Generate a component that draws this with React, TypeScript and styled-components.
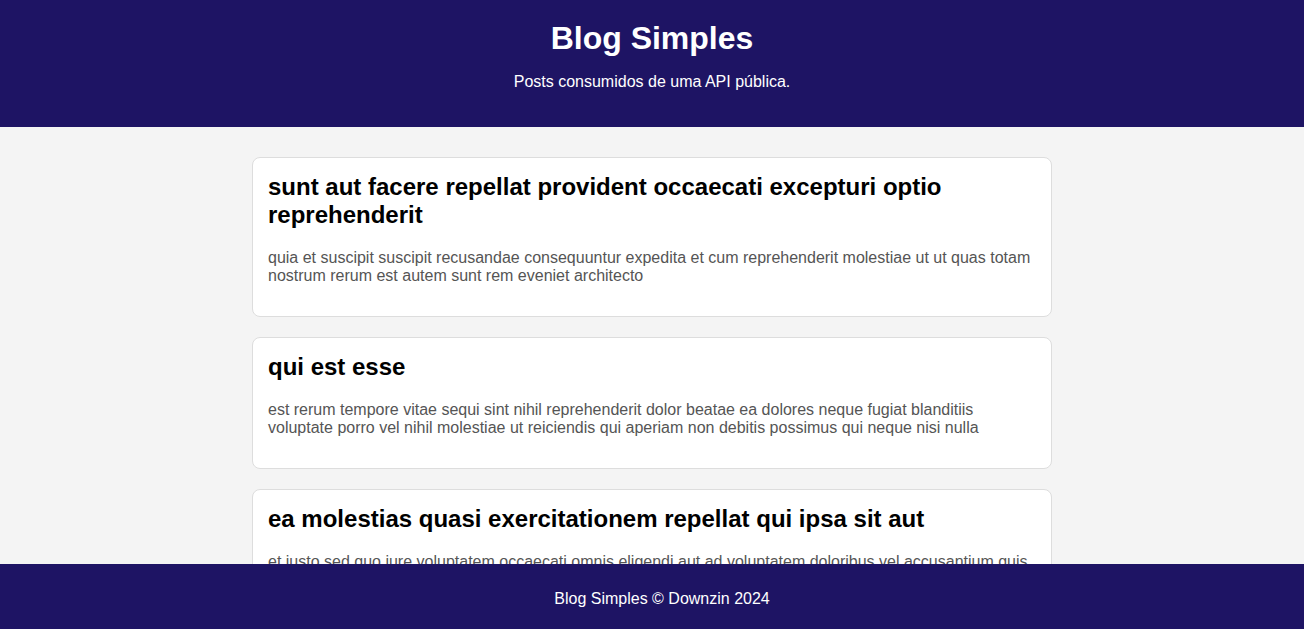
import React from "react";
import styled, { createGlobalStyle } from "styled-components";

const GlobalStyle = createGlobalStyle`
  html {
    scrollbar-width: none;
  }

  body {
    margin: 0;
    background: #f4f4f4;
    font-family: "Liberation Sans", Arial, sans-serif;
    font-size: 16px;
    line-height: 18px;
  }
`;

const Header = styled.header`
  padding: 20px 20px 36px;
  background: #1e1464;
  color: #fff;
  text-align: center;
`;

const SiteTitle = styled.h1`
  margin: 0 0 16px;
  font-size: 32px;
  line-height: 37px;
`;

const Tagline = styled.p`
  margin: 0;
`;

const Posts = styled.main`
  display: flex;
  flex-direction: column;
  gap: 20px;
  max-width: 800px;
  margin: 30px auto;
`;

const Post = styled.article`
  padding: 15px 15px 31px;
  border: 1px solid #ddd;
  border-radius: 8px;
  background: #fff;
`;

const PostTitle = styled.h2`
  margin: 0 0 20px;
  color: #000;
  font-size: 24px;
  line-height: 28px;
`;

const PostBody = styled.p`
  margin: 0;
  color: #555;
`;

const Footer = styled.footer`
  position: fixed;
  bottom: 0;
  width: 100%;
  padding: 26px 10px 21px;
  background: #1e1464;
  color: #fff;
  text-align: center;
`;

const posts = [
  {
    title: "sunt aut facere repellat provident occaecati excepturi optio reprehenderit",
    body: "quia et suscipit suscipit recusandae consequuntur expedita et cum reprehenderit molestiae ut ut quas totam nostrum rerum est autem sunt rem eveniet architecto",
  },
  {
    title: "qui est esse",
    body: "est rerum tempore vitae sequi sint nihil reprehenderit dolor beatae ea dolores neque fugiat blanditiis voluptate porro vel nihil molestiae ut reiciendis qui aperiam non debitis possimus qui neque nisi nulla",
  },
  {
    title: "ea molestias quasi exercitationem repellat qui ipsa sit aut",
    body: "et iusto sed quo iure voluptatem occaecati omnis eligendi aut ad voluptatem doloribus vel accusantium quis",
  },
];

export default function App() {
  return (
    <>
      <GlobalStyle />
      <Header>
        <SiteTitle>Blog Simples</SiteTitle>
        <Tagline>Posts consumidos de uma API pública.</Tagline>
      </Header>
      <Posts>
        {posts.map((post) => (
          <Post key={post.title}>
            <PostTitle>{post.title}</PostTitle>
            <PostBody>{post.body}</PostBody>
          </Post>
        ))}
      </Posts>
      <Footer>Blog Simples © Downzin 2024</Footer>
    </>
  );
}
